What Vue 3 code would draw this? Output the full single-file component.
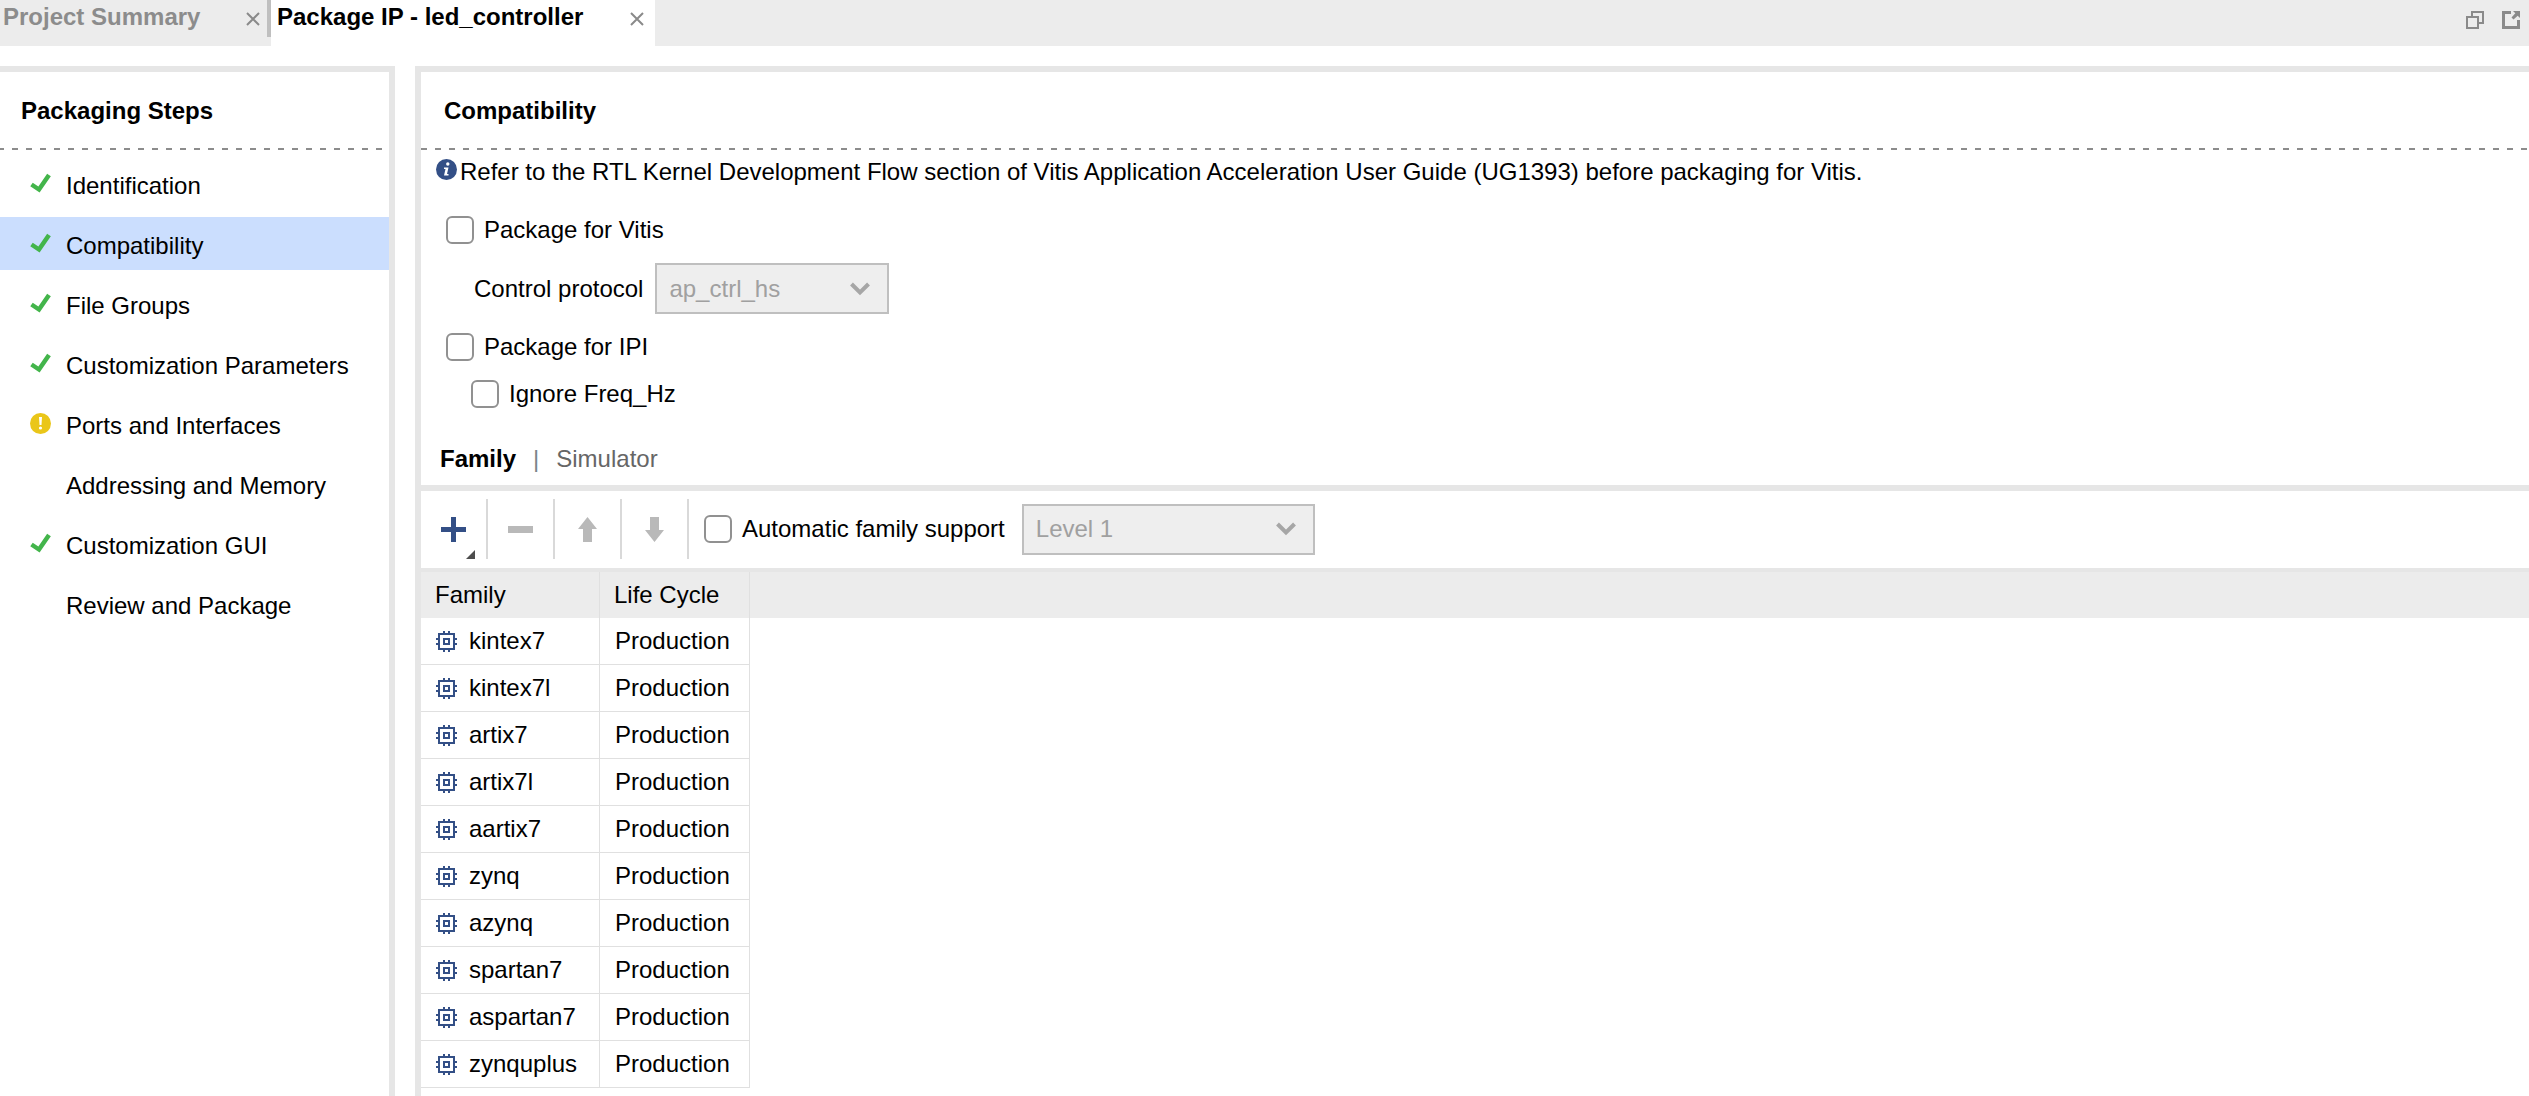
<script setup>
import { ref } from 'vue'

const steps = [
  { label: 'Identification', state: 'done' },
  { label: 'Compatibility', state: 'done' },
  { label: 'File Groups', state: 'done' },
  { label: 'Customization Parameters', state: 'done' },
  { label: 'Ports and Interfaces', state: 'warning' },
  { label: 'Addressing and Memory', state: 'none' },
  { label: 'Customization GUI', state: 'done' },
  { label: 'Review and Package', state: 'none' },
]
const currentStep = ref('Compatibility')

const families = [
  'kintex7', 'kintex7l', 'artix7', 'artix7l', 'aartix7',
  'zynq', 'azynq', 'spartan7', 'aspartan7', 'zynquplus',
]

const packageForVitis = ref(false)
const packageForIpi = ref(false)
const ignoreFreq = ref(false)
const autoFamily = ref(false)
</script>

<template>
  <div class="window">
    <header class="tabbar">
      <div class="tab">
        <button class="tab-name" type="button">Project Summary</button>
        <button class="tab-close" type="button" aria-label="Close Project Summary">
          <svg width="14" height="14" viewBox="0 0 14 14"><path d="M1 1L13 13M13 1L1 13" stroke="#8a8a8a" stroke-width="2" /></svg>
        </button>
        <span class="tab-divider"></span>
      </div>
      <div class="tab active">
        <button class="tab-name" type="button">Package IP - led_controller</button>
        <button class="tab-close" type="button" aria-label="Close Package IP">
          <svg width="14" height="14" viewBox="0 0 14 14"><path d="M1 1L13 13M13 1L1 13" stroke="#8a8a8a" stroke-width="2" /></svg>
        </button>
      </div>
      <div class="window-actions">
        <button type="button" aria-label="Restore">
          <svg width="18" height="18" viewBox="0 0 18 18" fill="none" stroke="#8a8a8a" stroke-width="2">
            <path d="M6 5V1H17V12H13" />
            <rect x="1" y="6" width="11" height="11" />
          </svg>
        </button>
        <button type="button" aria-label="Float">
          <svg width="18" height="18" viewBox="0 0 18 18">
            <path d="M9 1.5H1.5V16.5H16.5V9" fill="none" stroke="#8a8a8a" stroke-width="3" />
            <path d="M11 0H18V7L15.700 4.700L11.500 8.500L9.500 6.500L13.300 2.300Z" fill="#8a8a8a" />
          </svg>
        </button>
      </div>
    </header>

    <div class="body">
      <nav class="steps">
        <h2 class="title">Packaging Steps</h2>
        <ul>
          <li v-for="step in steps" :key="step.label">
            <button
              class="step"
              :class="{ selected: step.label === currentStep }"
              type="button"
              @click="currentStep = step.label"
            >
              <svg v-if="step.state === 'done'" width="21" height="21" viewBox="0 0 21 21">
                <path d="M1.500 11.500L9 16.500L19 2" fill="none" stroke="#43b54b" stroke-width="4.500" />
              </svg>
              <svg v-else-if="step.state === 'warning'" width="21" height="21" viewBox="0 0 21 21">
                <circle cx="10.500" cy="10.500" r="10.500" fill="#eac619" />
                <path d="M9 4H12L11.500 12H9.500Z" fill="#fff" />
                <circle cx="10.500" cy="15" r="1.600" fill="#fff" />
              </svg>
              <span v-else class="no-icon"></span>
              <span class="step-label">{{ step.label }}</span>
            </button>
          </li>
        </ul>
      </nav>

      <main class="content">
        <h2 class="title">Compatibility</h2>
        <p class="info">
          <svg width="21" height="21" viewBox="0 0 21 21">
            <circle cx="10.500" cy="10.500" r="10.500" fill="#334f86" />
            <circle cx="11.800" cy="5" r="1.700" fill="#fff" />
            <path d="M8 8.500H12.500L11 15H12.500V16.500H8L9.500 10H8Z" fill="#fff" />
          </svg>
          <span>Refer to the RTL Kernel Development Flow section of Vitis Application Acceleration User Guide (UG1393) before packaging for Vitis.</span>
        </p>

        <form class="options" @submit.prevent>
          <label class="check"><input v-model="packageForVitis" type="checkbox" />Package for Vitis</label>
          <div class="protocol">
            <label for="protocol">Control protocol</label>
            <span class="dropdown narrow">
              <select id="protocol" disabled><option>ap_ctrl_hs</option></select>
              <svg width="20" height="14" viewBox="0 0 20 14"><path d="M1.500 2L10 10.500L18.500 2" fill="none" stroke="#a6a6a6" stroke-width="4" /></svg>
            </span>
          </div>
          <label class="check"><input v-model="packageForIpi" type="checkbox" />Package for IPI</label>
          <label class="check nested"><input v-model="ignoreFreq" type="checkbox" />Ignore Freq_Hz</label>
        </form>

        <div class="views">
          <button class="view current" type="button">Family</button>
          <span class="bar">|</span>
          <button class="view" type="button">Simulator</button>
        </div>

        <div class="toolbar">
          <button class="tool" type="button" aria-label="Add">
            <svg width="25" height="25" viewBox="0 0 25 25"><path d="M10 0H15V10H25V15H15V25H10V15H0V10H10Z" fill="#334f86" /></svg>
            <svg class="more" width="9" height="9" viewBox="0 0 9 9"><path d="M9 0V9H0Z" fill="#4d4d4d" /></svg>
          </button>
          <button class="tool" type="button" aria-label="Remove" disabled>
            <svg width="25" height="25" viewBox="0 0 25 25"><path d="M0 9H25V16H0Z" fill="#b9b9b9" /></svg>
          </button>
          <button class="tool" type="button" aria-label="Move up" disabled>
            <svg width="19" height="25" viewBox="0 0 19 25"><path d="M9.500 0L19 12H14V25H5V12H0Z" fill="#b9b9b9" /></svg>
          </button>
          <button class="tool" type="button" aria-label="Move down" disabled>
            <svg width="19" height="25" viewBox="0 0 19 25"><path d="M9.500 25L19 13H14V0H5V13H0Z" fill="#b9b9b9" /></svg>
          </button>
          <label class="check auto"><input v-model="autoFamily" type="checkbox" />Automatic family support</label>
          <span class="dropdown wide">
            <select aria-label="Support level" disabled><option>Level 1</option></select>
            <svg width="20" height="14" viewBox="0 0 20 14"><path d="M1.500 2L10 10.500L18.500 2" fill="none" stroke="#a6a6a6" stroke-width="4" /></svg>
          </span>
        </div>

        <table>
          <thead>
            <tr>
              <th class="family" scope="col">Family</th>
              <th class="cycle" scope="col">Life Cycle</th>
              <td class="filler"></td>
            </tr>
          </thead>
          <tbody>
            <tr v-for="name in families" :key="name">
              <td>
                <span class="device">
                  <svg width="21" height="21" viewBox="0 0 21 21">
                    <path d="M7 0H9V3H7ZM12 0H14V3H12ZM7 18H9V21H7ZM12 18H14V21H12ZM0 7H3V9H0ZM0 12H3V14H0ZM18 7H21V9H18ZM18 12H21V14H18Z" fill="#334f86" />
                    <rect x="3" y="3" width="15" height="15" fill="none" stroke="#334f86" stroke-width="2" />
                    <rect x="8" y="8" width="5" height="5" fill="none" stroke="#334f86" stroke-width="2" />
                  </svg>
                  {{ name }}
                </span>
              </td>
              <td>Production</td>
            </tr>
          </tbody>
        </table>
      </main>
    </div>
  </div>
</template>

<style>
body {
  margin: 0;
  background: #fff;
}
</style>

<style scoped>
.window {
  display: flex;
  flex-direction: column;
  min-height: 100vh;
  color: #000;
  font: 24px/28px "Liberation Sans", Arial, sans-serif;
}

button {
  margin: 0;
  padding: 0;
  border: 0;
  background: none;
  color: inherit;
  font: inherit;
  text-align: left;
}

svg {
  display: block;
  flex: none;
}

.tabbar {
  display: flex;
  height: 46px;
  background: #ececec;
}

.tab {
  display: flex;
  align-items: flex-start;
  box-sizing: border-box;
  width: 271px;
  padding-left: 3px;
  color: #8c8c8c;
  font-weight: bold;
}

.tab.active {
  width: 384px;
  padding: 0 11px 0 6px;
  background: #fff;
  color: #000;
}

.tab-name {
  flex: 1;
  padding-top: 3px;
  white-space: nowrap;
}

.tab-close {
  padding-top: 12px;
}

.tab-divider {
  width: 4px;
  height: 37px;
  margin-left: 7px;
  background: #bfbfbf;
}

.window-actions {
  display: flex;
  gap: 18px;
  align-items: flex-start;
  margin-left: auto;
  padding: 11px 9px 0 0;
}

.body {
  display: flex;
  flex: 1;
  gap: 20px;
  padding-top: 20px;
}

.steps {
  box-sizing: border-box;
  flex: none;
  width: 395px;
  border: solid #e6e6e6;
  border-width: 6px 6px 0 0;
}

.title {
  margin: 0;
  padding: 25px 23px;
  font-size: 24px;
  line-height: 28px;
  background: repeating-linear-gradient(to right, #8c8c8c 0 6px, transparent 6px 14px) left bottom / 100% 2px no-repeat;
}

.steps .title {
  margin-right: 6px;
  padding-left: 21px;
  background-image: repeating-linear-gradient(to right, #8c8c8c 0 4px, transparent 4px 12px, #8c8c8c 12px 14px);
}

.steps ul {
  display: flex;
  flex-direction: column;
  gap: 7px;
  margin: 0;
  padding: 7px 0 0;
  list-style: none;
}

.step {
  display: flex;
  gap: 15px;
  align-items: center;
  width: 100%;
  height: 53px;
  padding-left: 30px;
}

.step.selected {
  background: #cbdefe;
}

.step-label {
  padding-top: 5px;
}

.no-icon {
  width: 21px;
}

.content {
  flex: 1;
  min-width: 0;
  border: solid #e6e6e6;
  border-width: 6px 0 0 6px;
}

.info {
  display: flex;
  gap: 3px;
  margin: 0;
  padding: 8px 0 0 15px;
}

.info svg {
  margin-top: 1px;
}

.options {
  display: flex;
  flex-direction: column;
  gap: 19px;
  align-items: flex-start;
  padding: 30px 0 0 25px;
}

.check {
  display: flex;
  gap: 10px;
  align-items: center;
}

.check input {
  appearance: none;
  box-sizing: border-box;
  width: 28px;
  height: 28px;
  margin: 0;
  border: 2px solid #919191;
  border-radius: 6px;
  background: #fff;
}

.check input:checked {
  background: #334f86;
}

.nested {
  margin-left: 25px;
}

.protocol {
  display: flex;
  gap: 12px;
  align-items: center;
  padding-left: 28px;
}

.dropdown {
  display: grid;
  align-items: center;
}

.dropdown > * {
  grid-area: 1 / 1;
}

.dropdown svg {
  justify-self: end;
  margin-right: 19px;
  pointer-events: none;
}

.narrow {
  width: 234px;
}

.wide {
  width: 293px;
}

select {
  appearance: none;
  box-sizing: border-box;
  width: 100%;
  height: 51px;
  margin: 0;
  padding: 0 44px 0 12px;
  border: 2px solid #bfbfbf;
  border-radius: 0;
  background: #eee;
  color: #a0a0a0;
  font: inherit;
  opacity: 1;
}

.views {
  display: flex;
  gap: 17px;
  padding: 37px 0 12px 19px;
  border-bottom: 6px solid #e6e6e6;
}

.view {
  color: #666;
}

.view.current {
  color: #000;
  font-weight: bold;
}

.bar {
  color: #7b868a;
}

.toolbar {
  display: flex;
  align-items: center;
  padding: 8px 0 9px;
  border-bottom: 4px solid #e6e6e6;
}

.tool {
  position: relative;
  display: flex;
  align-items: center;
  justify-content: center;
  box-sizing: border-box;
  width: 67px;
  height: 60px;
  border-right: 2px solid #d9d9d9;
}

.more {
  position: absolute;
  right: 11px;
  bottom: 0;
}

.auto {
  margin: 0 17px 0 15px;
}

table {
  width: 100%;
  border-spacing: 0;
  table-layout: fixed;
}

th,
td {
  box-sizing: border-box;
  padding: 9px 15px;
  border-right: 1px solid #e0e0e0;
  font-weight: normal;
  text-align: left;
}

th {
  padding-left: 14px;
}

tbody td {
  border-bottom: 1px solid #e0e0e0;
}

thead {
  background: #ececec;
}

.family {
  width: 179px;
}

.cycle {
  width: 150px;
}

.filler {
  border: 0;
}

.device {
  display: flex;
  gap: 12px;
  align-items: center;
}
</style>
